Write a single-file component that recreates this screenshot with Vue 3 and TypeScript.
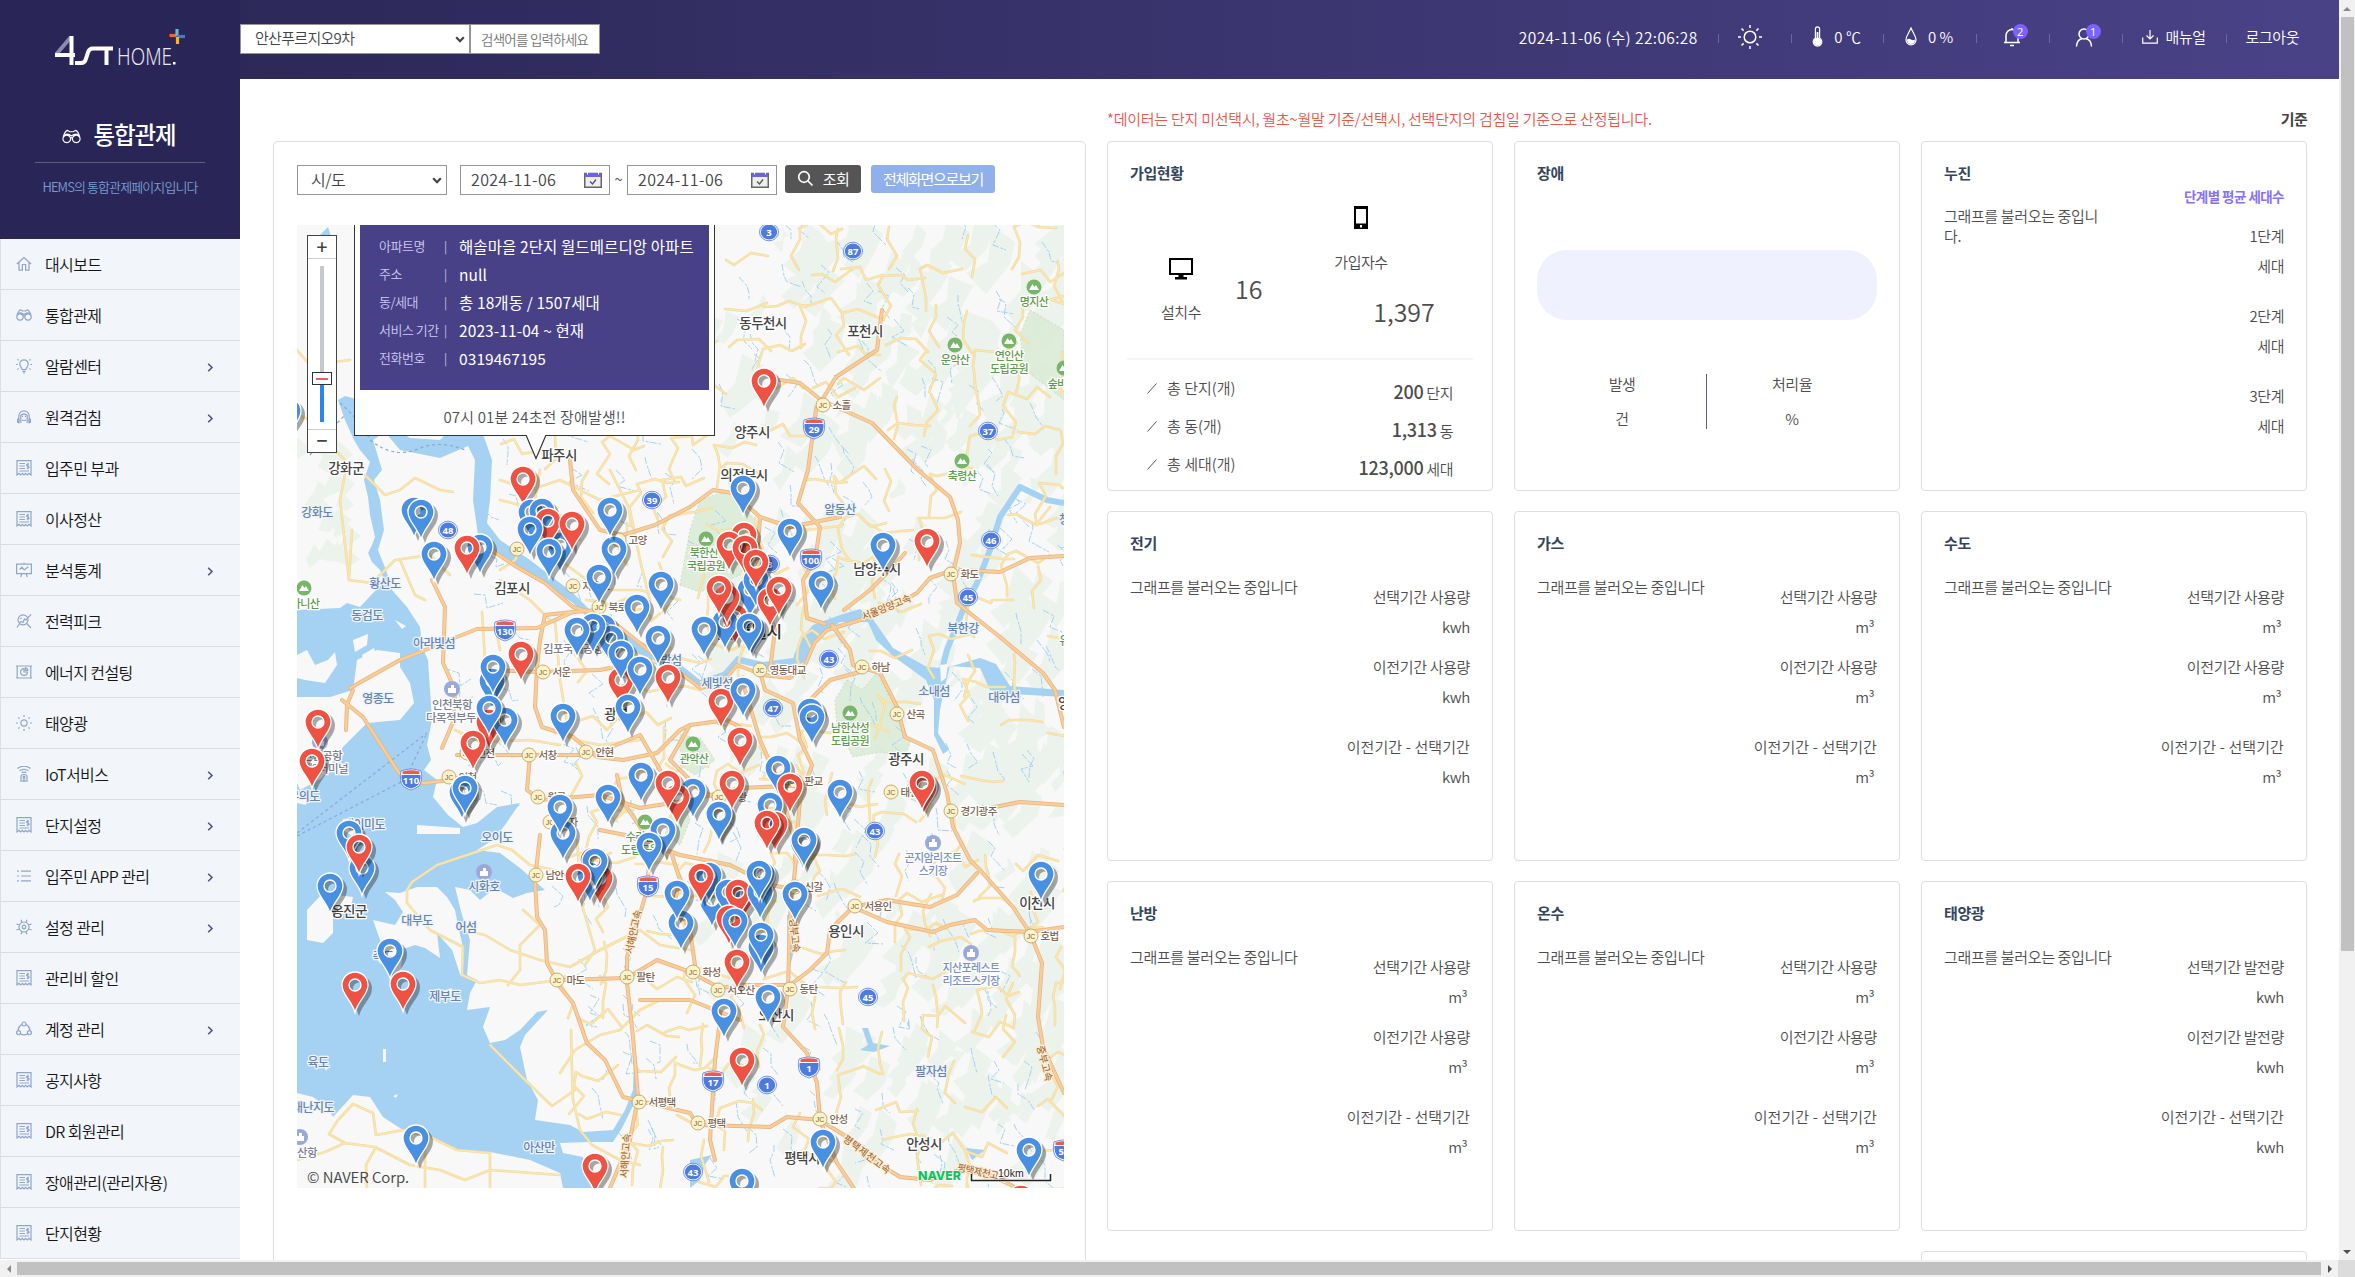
<script setup lang="ts">
interface MenuItem { label: string; icon: string; sub?: boolean }
const menu: MenuItem[] = [
  { label: '대시보드', icon: 'home' },
  { label: '통합관제', icon: 'bino' },
  { label: '알람센터', icon: 'bulb', sub: true },
  { label: '원격검침', icon: 'head', sub: true },
  { label: '입주민 부과', icon: 'bill' },
  { label: '이사정산', icon: 'bill' },
  { label: '분석통계', icon: 'board', sub: true },
  { label: '전력피크', icon: 'peak' },
  { label: '에너지 컨설팅', icon: 'consult' },
  { label: '태양광', icon: 'sun' },
  { label: 'IoT서비스', icon: 'iot', sub: true },
  { label: '단지설정', icon: 'bill', sub: true },
  { label: '입주민 APP 관리', icon: 'list', sub: true },
  { label: '설정 관리', icon: 'gear', sub: true },
  { label: '관리비 할인', icon: 'bill' },
  { label: '계정 관리', icon: 'share', sub: true },
  { label: '공지사항', icon: 'bill' },
  { label: 'DR 회원관리', icon: 'bill' },
  { label: '장애관리(관리자용)', icon: 'bill' },
  { label: '단지현황', icon: 'bill' },
]
const icons: Record<string, string> = {
  home: 'M.8 8 8 1.6 15.2 8M3 6.5V14.2H6.4V8.5H9.6V14.2H13V6.5',
  bino: 'M.8 9.5C1.600 6 3 3.200 4.600 2.800L6.500 4H9.500L11.400 2.800C13 3.200 14.400 6 15.200 9.500M4 6.800a3.200 3.200 0 1 0 .01 0M12 6.800a3.200 3.200 0 1 0 .01 0M7 9.600Q8 8.400 9 9.600M2.500 6.500Q5 5 8 7.500 11 5 13.500 6.500',
  bulb: 'M6 11.5C6 9.8 3.8 8.8 3.8 6a4.2 4.2 0 0 1 8.4 0C12.2 8.8 10 9.8 10 11.5ZM6.3 13.3H9.7M7 15H9M0 6.5H1.6M14.4 6.5H16M1.4 1.3 2.6 2.4M14.6 1.3 13.4 2.4M1.4 11.4 2.6 10.6M14.6 11.4 13.4 10.6',
  head: 'M2.8 10V7a5.2 5.2 0 0 1 10.4 0V10M4.8 14V6.5Q8 3.5 11.2 6.5V14M2 9.5V14M1.6 10V13.5M3 9.500V14.500M13 9.500V14.500M14 9.5V14M14.4 10V13.5M6.5 6.8V8.2M9.5 6.8V8.2M6.2 11Q8 12 9.8 11',
  bill: 'M1 .6H15V15L13 13.4 11.3 15 9.6 13.4 8 15 6.4 13.4 4.7 15 3 13.4 1 15ZM3.4 3.5H9M3.4 6H9M3.4 8.5H9M3.4 11H13M13 4H11.5Q10.5 4.2 10.6 5.2 11 6 12 6 13.2 6.5 13 7.5 12.6 8.4 10.7 8.2M11.9 2.8V9.2',
  board: 'M.6 2.2H15.4V11.6H.6ZM8 .8V2.2M5.8 11.6 4.8 15M10.2 11.6 11.2 15M3.6 7.5 6 5.2 8.2 8 12.4 4.8',
  peak: 'M7 1.8a5 5 0 1 0 .01 0M10.6 10.5 15 15M1 14.5 5 8.5 7 9.5 8.5 6 10 7 15 1.4M4 5.5 6 5',
  consult: 'M0 2H16M0 14H16M1.2 2V14M14.8 2V14M8 4.6a3.4 3.4 0 1 0 3.4 3.4H8ZM9.5 3.8A3 3 0 0 1 12 6.5H9.5Z',
  sun: 'M8 4.8a3.2 3.2 0 1 0 .01 0M8 0V2M8 14V16M0 8H2M14 8H16M2.3 2.3 3.6 3.6M12.4 12.4 13.7 13.7M2.3 13.7 3.6 12.4M12.4 3.6 13.7 2.3',
  iot: 'M1.5 2.4Q8-2 14.5 2.4M3.6 4.8Q8 1.8 12.4 4.8M5.6 6.8Q8 5.4 10.4 6.8M5 16V10.5Q5 8.5 8 8.5T11 10.5V16ZM6.5 13H9.5M6.5 14.6H9.5M8 10.2a.8.8 0 1 0 .01 0',
  list: 'M1 3.2H3M5 3.2H15M1 8H3M5 8H15M1 12.8H3M5 12.8H15',
  gear: 'M8 3a5 5 0 1 0 .01 0M8 6.2a1.8 1.8 0 1 0 .01 0M5 .8 6 3.400M11 .8 10 3.400M5 15.200 6 12.600M11 15.200 10 12.600M.4 5 3.600 6M.4 11 3.600 10M12.400 6 15.600 5M12.400 10 15.600 11',
  share: 'M8 1a2 2 0 1 0 .01 0M2.6 9.6a2 2 0 1 0 .01 0M13.4 9.6a2 2 0 1 0 .01 0M5.8 3.6Q2.4 5.5 2 9.4M10.2 3.6Q13.6 5.5 14 9.4M4.6 13Q8 14.8 11.4 13',
}

interface Usage { title: string; unit: string; kind: string }
const usage: Usage[] = [
  { title: '전기', unit: 'kwh', kind: '사용량' },
  { title: '가스', unit: 'm³', kind: '사용량' },
  { title: '수도', unit: 'm³', kind: '사용량' },
  { title: '난방', unit: 'm³', kind: '사용량' },
  { title: '온수', unit: 'm³', kind: '사용량' },
  { title: '태양광', unit: 'kwh', kind: '발전량' },
]
const totals = [
  { label: '총 단지(개)', value: '200', unit: '단지' },
  { label: '총 동(개)', value: '1,313', unit: '동' },
  { label: '총 세대(개)', value: '123,000', unit: '세대' },
]
const info = [
  ['아파트명', '해솔마을 2단지 월드메르디앙 아파트'],
  ['주소', 'null'],
  ['동/세대', '총 18개동 / 1507세대'],
  ['서비스 기간', '2023-11-04 ~ 현재'],
  ['전화번호', '0319467195'],
]

/* ---------- map data ---------- */
const sea = '297,610 340,608 347,603 360,607 373,593 385,582 380,570 372,562 368,553 372,545 375,537 370,515 368,497 364,480 370,462 360,450 354,440 345,420 338,400 345,396 360,400 380,420 410,438 440,440 465,415 484,437 492,460 490,500 487,523 500,540 530,560 573,593 600,620 657,650 680,664 700,680 723,672 737,656 763,662 793,658 800,640 813,625 840,615 860,609 872,618 893,648 927,667 945,668 980,658 996,664 1010,686 1064,690 1064,697 1010,694 990,690 980,668 950,666 944,690 940,710 938,733 949,750 943,754 934,735 934,700 926,680 893,656 876,640 868,622 840,622 815,640 805,662 790,668 763,669 738,663 725,681 700,690 680,675 655,664 610,640 573,603 540,580 500,555 478,535 473,500 475,460 468,446 440,458 400,450 385,432 373,440 382,470 374,480 380,500 384,530 378,550 386,570 392,590 407,607 420,627 422,647 428,660 430,690 432,720 427,745 431,760 424,770 437,780 433,797 448,815 463,827 477,823 497,807 520,803 505,825 493,840 477,850 500,853 520,868 545,890 527,893 513,898 495,888 480,900 470,890 455,887 462,915 470,940 467,975 477,980 470,993 467,1010 490,1007 483,1027 490,1043 505,1040 520,1030 537,1012 548,1010 525,1035 520,1047 527,1080 538,1100 535,1120 570,1125 583,1132 613,1130 625,1110 633,1090 634,1060 637,1060 636,1100 622,1128 613,1142 587,1142 560,1143 563,1153 583,1157 592,1188 563,1188 560,1173 530,1160 490,1152 457,1150 430,1137 403,1130 383,1117 370,1097 353,1095 333,1117 327,1107 313,1097 297,1093'
const northHan = '940,677 947,650 963,610 977,583 990,550 1000,517 1020,487 1047,500 1064,503'
const islands = [
  '297,697 330,697 353,690 357,660 377,650 400,653 400,667 410,683 414,703 400,720 367,723 343,747 322,778 300,790 297,783',
  '297,655 307,650 315,665 328,660 335,652 337,665 325,683 305,680 297,678',
  '353,640 368,634 367,645 355,652', '362,655 374,648 376,656 364,665',
  '307,910 323,893 353,897 350,910 333,917 333,933 323,943 307,940',
  '385,892 400,893 417,887 437,887 447,897 455,910 459,930 463,947 461,977 452,950 437,933 440,958 425,948 415,945 400,950 395,965 385,955 380,940 373,920 395,925 403,912 395,900',
  '372,955 388,948 402,958 400,975 388,970', '440,992 452,988 450,998 442,1000', '345,820 358,826 352,836 343,830',
  '417,825 460,828 460,834 417,834', '383,1049 386,1049 386,1062 383,1062', '393,1096 398,1094 396,1098', '324,1066 328,1068 326,1071', '297,795 308,793 306,805 297,803',
  '315,1112 320,1115 316,1120', '395,620 406,626 402,629', '940,665 948,664 946,678 941,682',
]
const parks = [
  '680,585 690,530 700,500 730,490 755,520 757,540 740,575 700,592',
  '847,680 862,690 877,673 897,713 910,743 905,756 880,752 853,757 837,727 835,700',
  '1030,310 1064,330 1064,400 1045,385 1025,370 1020,335', '673,807 683,800 690,820 680,845 665,835', '680,735 700,738 715,760 695,775 680,765',
]
const highways = [
  '432,580 445,607 443,663 455,690 453,722 442,748', '350,688 400,660 430,648 457,637 477,629 537,628 573,612 600,610',
  '342,700 363,717 397,770 405,780 425,783 450,780 470,775', '353,690 347,705 346,730',
  '570,460 573,490 600,530 623,535 655,525 690,507 713,490 733,493 760,517 790,527 815,522 840,517',
  '487,547 517,567 545,583 573,607 607,617 657,657 690,680 700,688 723,682 737,665 763,675 790,678 805,665 815,642 827,630 860,620 887,610 917,593 930,578 953,570',
  '573,612 545,615 540,640 537,667 535,707 542,727 573,737 597,757 623,760 657,753 680,730 690,725 727,720 745,730',
  '457,755 497,755 530,755 587,755 600,752 640,735 660,770', '530,755 527,790 540,800 600,795 640,808 690,800 740,788 790,786',
  '490,670 540,672 600,670 650,660', '617,775 622,800 642,830 650,860 645,897 627,957 627,983 633,1037 638,1097 630,1140 610,1188',
  '540,835 535,880 537,917 545,930 547,963 560,987 573,1003 587,1043 605,1060 623,1097 690,1113 698,1125 770,1127 787,1117 820,1120 847,1137 865,1155 900,1177 930,1180 960,1170 990,1175 1013,1186',
  '560,980 627,978 657,960 690,972 720,988 745,985 790,985 810,970 827,953 830,930 853,907 887,900 930,907 957,895 977,873',
  '853,907 887,922 933,932 950,925 975,920 987,930 1030,932 1064,927',
  '745,690 760,740 778,780 797,850 790,917 788,990 783,1027 807,1053 817,1083 820,1120 837,1163 855,1190',
  '760,672 765,690 793,703 800,740 812,765 800,800 795,860', '832,625 850,650 853,665 880,673 897,707 905,737 933,750 947,793 953,827 970,860 980,870 1013,907 1030,933 1042,963 1038,1017 1043,1047 1064,1093',
  '882,310 877,350 836,377 816,410 808,470 798,503 820,527 815,560 803,580 807,618 825,624', '780,380 800,383 821,400 872,423 918,470 950,497 958,520 960,543 953,573 957,603 1000,637 1043,673 1055,690 1064,727',
  '960,570 1000,572 1030,558 1064,556', '760,517 757,560 765,600 775,630 770,670', '844,610 870,590 885,575 905,553',
  '600,830 625,835 680,855 730,865 770,885 800,890', '690,725 670,760 700,790 720,800', '990,808 1020,802 1064,805', '720,1020 715,1060 710,1140 715,1160', '640,1000 690,1000 740,1020',
  '672,855 680,880 675,900 690,930 695,965', '810,700 830,680 860,672',
]
const roads = [
  '345,474 340,500 349,580 372,583 395,560 430,555 450,575', '365,475 385,495 400,490 415,478 440,490 453,492', '349,580 352,530', '297,350 310,365 350,360',
  '400,560 415,595 425,600', '297,415 310,420 330,445 345,460', '482,612 485,660 487,690', '497,635 500,650', '540,470 530,530 515,560 500,570',
  '407,890 412,882 437,865 497,845 512,850 530,865 555,870', '407,890 407,903 430,930 463,947 462,975 480,983 500,980 520,985 560,980', '463,930 485,935 510,950 540,960 570,967 600,950 640,930',
  '490,1045 520,1075 552,1106 575,1090', '523,910 540,925 520,945 520,970 508,985', '329,1134 338,1120 353,1104 373,1113 376,1135 403,1130 430,1137 457,1150 490,1153',
  '329,1134 345,1143 375,1147 410,1165 440,1170 465,1180 490,1170 560,1175', '297,1160 325,1152 345,1143', '376,1147 366,1165 367,1188', '425,1150 425,1188', '490,1153 490,1188',
  '571,1030 572,1070 573,1100 580,1130 592,1145 620,1160 640,1165', '560,1073 575,1050 600,1035 620,1030 640,1010 660,1000',
  '575,740 600,745 640,740', '455,730 480,742 530,740 560,745', '500,580 530,600 550,620', '577,840 582,905 595,950 585,965', '600,950 640,930 660,945 690,950',
  '500,480 530,490 560,480 600,500 640,490', '500,500 540,510 580,540', '610,470 630,510 640,560 650,600', '560,560 600,590 640,590 680,600', '555,620 560,680 570,740',
]

let seed = 20241
const rnd = (): number => {
  seed = (seed * 1103515245 + 12345) % 2147483648
  return seed / 2147483648
}
/* western limit of solid ground at a given height */
const coast = (y: number): number => (y < 470 ? 510 : y < 830 ? 585 : y < 1010 ? 560 : y < 1120 ? 585 : 625)
const j = (v: number, a: number): number => Math.round(v + (rnd() - 0.5) * a)

const minor: string[] = []
const streams: string[] = []
const hills: string[] = []
const step = 42
for (let y = 225; y < 1230; y += step) {
  for (let x = coast(y); x < 1090; x += step) {
    const px = j(x, 20), py = j(y, 20)
    if (rnd() < 0.5) minor.push(`${px},${py} ${j(px + 13, 16)},${j(py, 16)} ${j(px + 27, 12)},${j(py, 22)} ${px + step},${j(py, 16)}`)
    if (rnd() < 0.5) minor.push(`${px},${py} ${j(px, 16)},${j(py + 13, 10)} ${j(px, 20)},${j(py + 27, 10)} ${j(px, 14)},${py + step}`)
    const sx = j(px, 60), sy = j(py, 60)
    streams.push(`${sx},${sy} ${j(sx + 6, 12)},${j(sy + 8, 8)} ${j(sx + 4, 16)},${j(sy + 18, 8)} ${j(sx + 10, 20)},${j(sy + 26, 14)}`)
  }
}
for (let i = 0; i < 330; i++) {
  const x = 700 + Math.pow(rnd(), 0.7) * 365, y = 225 + rnd() * 960
  const s = 10 + rnd() * 24
  hills.push(`${j(x, 6)},${j(y - s, 6)} ${j(x + s * 0.7, 8)},${j(y - s * 0.5, 8)} ${j(x + s * 0.4, 8)},${j(y + s * 0.2, 8)} ${j(x - s * 0.3, 8)},${j(y + s, 8)} ${j(x - s * 0.8, 8)},${j(y + s * 0.5, 8)} ${j(x - s * 0.2, 6)},${j(y, 6)}`)
}
for (let i = 0; i < 30; i++) {
  const x = 297 + rnd() * 90, y = 440 + rnd() * 120
  if (x < 350) hills.push(`${j(x, 6)},${j(y - 12, 6)} ${j(x + 12, 8)},${j(y, 8)} ${j(x, 8)},${j(y + 10, 8)} ${j(x - 10, 8)},${j(y + 5, 8)}`)
}
for (let i = 0; i < 26; i++) {
  const x = 420 + rnd() * 90, y = 480 + rnd() * 330
  if (x > 445) streams.push(`${j(x, 6)},${j(y, 6)} ${j(x + 10, 8)},${j(y + 3, 8)} ${j(x + 14, 8)},${j(y + 14, 8)} ${j(x + 24, 8)},${j(y + 12, 8)}`)
}

type Pt = [number, number, string]
const big: Pt[] = [
  [346, 468, '강화군'], [512, 588, '김포시'], [763, 323, '동두천시'], [865, 331, '포천시'], [752, 432, '양주시'], [744, 475, '의정부시'], [877, 569, '남양주시'],
  [906, 759, '광주시'], [846, 931, '용인시'], [1037, 903, '이천시'], [776, 1015, '오산시'], [924, 1144, '안성시'], [802, 1158, '평택시'], [349, 911, '옹진군'], [559, 455, '파주시'], [616, 714, '광명'],
]
const water: Pt[] = [
  [317, 512, '강화도'], [385, 583, '황산도'], [367, 615, '동검도'], [434, 643, '아라빛섬'], [378, 698, '영종도'], [497, 837, '오이도'], [417, 920, '대부도'],
  [466, 927, '어섬'], [445, 996, '제부도'], [318, 1062, '육도'], [539, 1147, '아산만'], [840, 509, '알동산'], [963, 628, '북한강'],
  [934, 691, '소내섬'], [1004, 697, '대하섬'], [717, 683, '세빛섬'], [671, 660, '밤섬'], [931, 1071, '팔자섬'], [484, 886, '시화호'], [364, 824, '대이미도'], [383, 956, '측도'],
]
const green: Pt[] = [
  [1034, 302, '명지산'], [955, 360, '운악산'], [1009, 356, '연인산'], [1009, 369, '도립공원'], [962, 476, '축령산'], [704, 553, '북한산'], [706, 566, '국립공원'],
  [850, 728, '남한산성'], [850, 741, '도립공원'], [694, 759, '관악산'], [640, 837, '수리산'], [640, 850, '도립공원'],
]
/* names that run past the left or right border of the map window */
const edge: [number, number, string, string][] = [
  [1064, 703, '양', 'big'], [305, 603, '마니산', 'green'], [1062, 383, '숲바다', 'green'], [1064, 640, '유', 'green'],
  [313, 1107, '대난지도', 'wat'], [304, 796, '무의도', 'wat'], [1064, 519, '청', 'wat'], [302, 1152, '서산항', 'gray'],
  [322, 755, '인천공항', 'gray'], [325, 768, '제2터미널', 'gray'],
]
const greenDots = [[1034, 287], [955, 345], [1009, 341], [1064, 368], [962, 461], [706, 539], [304, 588], [850, 713], [693, 744], [645, 822]]
const gray: Pt[] = [[452, 704, '인천북항'], [451, 717, '다목적부두'], [573, 648, '김포국제공항']]
const resort: Pt[] = [[933, 858, '곤지암리조트'], [933, 871, '스키장'], [971, 968, '지산포레스트'], [971, 981, '리조트스키장']]
const dots = [[452, 689], [484, 872], [933, 843], [971, 953], [300, 1137], [320, 742]]
const jc: Pt[] = [
  [823, 405, '소흘'], [517, 549, ''], [573, 586, '자유로'], [599, 607, '북로'], [543, 672, '서운'], [529, 755, '서창'], [586, 752, '안현'], [449, 777, '인천'], [538, 797, '월곶'], [467, 753, '인천'],
  [550, 822, '군자'], [536, 875, '남안산'], [557, 980, '마도'], [627, 977, '팔탄'], [639, 1102, '서평택'], [760, 670, '영동대교'], [862, 667, '하남'], [897, 714, '산곡'], [951, 574, '화도'],
  [891, 792, '태전'], [951, 811, '경기광주'], [719, 797, '의왕'], [795, 781, '판교'], [855, 906, '서용인'], [1031, 936, '호법'], [693, 972, '화성'], [718, 990, '서오산'], [790, 989, '동탄'],
  [795, 887, '신갈'], [698, 1123, '평택'], [820, 1119, '안성'], [619, 540, '고양'],
]
const routes: Pt[] = [[769, 232, '3'], [853, 251, '87'], [988, 431, '37'], [652, 500, '39'], [448, 530, '48'], [991, 540, '46'], [968, 597, '45'], [829, 659, '43'], [773, 708, '47'], [875, 831, '43'], [868, 997, '45'], [767, 1085, '1'], [693, 1172, '43'], [770, 564, '3']]
const shields: Pt[] = [[814, 428, '29'], [811, 559, '100'], [505, 630, '130'], [411, 779, '110'], [648, 886, '15'], [713, 1081, '17'], [809, 1067, '1'], [1064, 1150, '50']]
const brown: [number, number, number, string, number][] = [
  [886, 607, -22, '서울양양고속', 52], [633, 932, -78, '서해안고속', 44], [625, 1156, -86, '서해안고속', 44], [795, 935, 84, '경부고속', 34],
  [1045, 1063, 76, '중부고속', 36], [867, 1154, 37, '평택제천고속', 56], [982, 1172, 12, '평택제천고속', 50],
]

type Pin = [number, number, 0 | 1]
const pins: Pin[] = [
  [288, 411, 0], [764, 381, 1], [414, 510, 0], [421, 512, 0], [523, 479, 1], [531, 512, 0], [542, 511, 0], [560, 545, 0], [548, 521, 1], [530, 529, 0], [572, 524, 1], [549, 551, 0],
  [614, 549, 0], [610, 510, 0], [599, 577, 0], [661, 584, 0], [637, 607, 0], [434, 554, 0], [480, 547, 0], [467, 548, 1], [603, 627, 0], [611, 638, 0], [593, 626, 0], [577, 630, 0],
  [621, 680, 1], [621, 653, 0], [658, 638, 0], [640, 669, 0], [668, 677, 1], [628, 707, 0], [521, 654, 1], [492, 681, 0], [493, 667, 0], [489, 722, 1], [505, 720, 0], [489, 708, 0], [473, 743, 1],
  [563, 716, 0], [318, 722, 1], [312, 761, 1], [462, 792, 0], [465, 788, 0], [563, 833, 0], [560, 807, 0], [608, 797, 0], [641, 775, 0], [693, 791, 0], [677, 797, 1], [668, 783, 1], [663, 830, 0], [649, 845, 0],
  [743, 488, 0], [790, 531, 0], [744, 535, 1], [729, 544, 1], [750, 590, 0], [745, 548, 1], [756, 580, 0], [756, 562, 1], [821, 583, 0], [735, 617, 1], [725, 622, 0], [727, 597, 1], [719, 588, 1],
  [770, 600, 1], [779, 589, 1], [704, 629, 0], [752, 628, 0], [749, 626, 0], [883, 545, 0], [927, 541, 1], [721, 701, 1], [743, 690, 0], [810, 711, 0], [812, 717, 0], [740, 740, 1],
  [778, 768, 0], [732, 783, 1], [790, 786, 1], [840, 792, 0], [924, 787, 1], [922, 783, 1], [718, 814, 0], [719, 814, 0], [770, 805, 0], [775, 824, 1], [767, 823, 1], [803, 842, 0], [804, 840, 0],
  [349, 833, 0], [362, 868, 0], [359, 847, 1], [330, 886, 0], [390, 951, 0], [403, 984, 1], [355, 985, 1], [600, 878, 1], [590, 875, 0], [593, 860, 1], [595, 861, 0], [578, 876, 1],
  [681, 923, 0], [677, 893, 0], [712, 900, 0], [709, 875, 0], [701, 876, 1], [728, 892, 0], [741, 896, 1], [738, 892, 1], [760, 892, 0], [762, 874, 0], [759, 873, 0], [795, 894, 0], [729, 918, 1], [735, 921, 0],
  [761, 947, 0], [761, 935, 0], [737, 962, 1], [768, 997, 0], [724, 1011, 0], [742, 1060, 1], [1041, 874, 0], [823, 1142, 0], [1029, 1150, 0], [742, 1181, 0], [1021, 1198, 1], [416, 1138, 0], [595, 1166, 1],
]
const pinPath = 'M0 27.5C-3.5 15-13 10-13 0A13 13 0 0 1 13 0C13 10 3.5 15 0 27.5ZM0-6A6 6 0 1 0 0 6 6 6 0 1 0 0-6Z'
</script>

<template>
  <div class="page">
    <div class="view">
      <aside class="side">
        <div class="brand">
          <svg class="logo" width="132" height="40" viewBox="0 0 132 40">
            <path d="M1.500 26 16 9" stroke="#8d8ab0" stroke-width="4" />
            <path d="M0 27H20M16.500 8V37" stroke="#fff" stroke-width="4" />
            <path d="M20 35H26Q30 35 31 30.500L33 24.500Q34 20.500 38 20.500H58M51.500 20.500V37" fill="none" stroke="#fff" stroke-width="4" />
            <text x="62" y="36.500" textLength="55" lengthAdjust="spacingAndGlyphs" class="logo-text">HOME</text>
            <rect x="118" y="34" width="2.500" height="2.500" fill="#fff" />
            <path d="M114.500 7.500H121.500" stroke="#e8663d" stroke-width="3.200" /><path d="M122 1V8" stroke="#5bc0d0" stroke-width="3.200" />
            <path d="M122 8.500H130" stroke="#4a78c8" stroke-width="3.200" /><path d="M122.500 9V16" stroke="#f3b61f" stroke-width="3.200" />
          </svg>
          <div class="brand-title">
            <svg width="19" height="19" viewBox="0 0 16 16" class="ico white"><path :d="icons.bino" /></svg>
            <span>통합관제</span>
          </div>
          <p class="brand-desc">HEMS의 통합관제페이지입니다</p>
        </div>
        <nav class="menu">
          <div v-for="m in menu" :key="m.label" class="item">
            <svg width="16" height="16" viewBox="0 0 16 16" class="ico"><path :d="icons[m.icon]" /></svg>
            <span class="item-label">{{ m.label }}</span>
            <svg v-if="m.sub" width="7" height="9" viewBox="0 0 7 9" class="chev"><path d="M1.200.8 5 4.500 1.200 8.200" /></svg>
          </div>
        </nav>
      </aside>

      <div class="right">
        <header class="top">
          <div class="box complex"><span>안산푸르지오9차</span><svg width="10" height="7" viewBox="0 0 10 7"><path d="M1.200 1.200 5 5.200 8.800 1.200" /></svg></div>
          <input class="search" placeholder="검색어를 입력하세요" />
          <div class="status">
            <span class="clock">2024-11-06 (수) 22:06:28</span>
            <span class="cell w73"><svg width="26" height="26" viewBox="0 0 26 26" class="wi sunny"><circle cx="13" cy="13" r="5.800" /><path d="M13 1V4M13 22V25M1 13H4M22 13H25M4.500 4.500 6.600 6.600M19.400 19.400 21.500 21.500M4.500 21.500 6.600 19.400M19.400 6.600 21.500 4.500" /></svg></span>
            <span class="cell w92"><svg width="11" height="21" viewBox="0 0 11 21" class="wi thin"><path d="M3.400 12V3a2.100 2.100 0 0 1 4.200 0V12a4.300 4.300 0 1 1-4.200 0Z" /><circle cx="5.500" cy="15.600" r="3.200" fill="#fff" /><path d="M5.500 6V14" stroke-width="1.800" /></svg><b class="val">0 ℃</b></span>
            <span class="cell w93"><svg width="12" height="19" viewBox="0 0 12 19" class="wi thin"><path d="M6 1C8 6 11 9 11 12.800a5 5 0 0 1-10 0C1 9 4 6 6 1Z" /><path d="M2 12.500Q4 11 6 12.500T10 12.500Q10 17 6 17T2 12.500Z" fill="#fff" stroke="none" /></svg><b class="val">0 %</b></span>
            <span class="cell w73"><svg width="18" height="20" viewBox="0 0 18 20" class="wi"><path d="M1 15.500H17M3 15.500V8.500a6 6 0 0 1 12 0V15.500M9 1V2.500M7 18.500H11" /></svg><i class="badge">2</i></span>
            <span class="cell w73"><svg width="18" height="20" viewBox="0 0 18 20" class="wi person"><circle cx="9" cy="7" r="5" /><path d="M1.500 19.500Q2 12.500 7 11.800M16.500 19.500Q16 12.500 11 11.800" /></svg><i class="badge">1</i></span>
            <span class="cell w104"><svg width="16" height="14" viewBox="0 0 16 14" class="wi thin"><path d="M8 0V8.500M4.500 5.500 8 9 11.500 5.500M.7 7.500V13.200H15.300V7.500" /></svg><span class="man">매뉴얼</span></span>
            <span class="cell logout">로그아웃</span>
          </div>
        </header>

        <main class="main">
          <section class="map-card">
            <div class="filters">
              <div class="box city"><span>시/도</span><svg width="10" height="7" viewBox="0 0 10 7"><path d="M1.200 1.200 5 5.200 8.800 1.200" /></svg></div>
              <template v-for="n in 2" :key="n">
                <div class="box date"><span>2024-11-06</span>
                  <svg class="cal" width="18" height="16" viewBox="0 0 18 16"><rect x=".75" y="1.500" width="16.500" height="13.750" fill="#eee" stroke="#666" stroke-width="1.500" /><rect x="1" y="1" width="16" height="4" fill="#6c63e0" /><path d="M3.500 0V2.500M14.500 0V2.500" stroke="#fff" /><path d="M6 9.500 8.500 12 12 7.500" fill="none" stroke="#555" stroke-width="1.300" /></svg>
                </div>
                <span v-if="n === 1" class="tilde">~</span>
              </template>
              <button class="btn find"><svg width="17" height="17" viewBox="0 0 17 17"><circle cx="7" cy="7" r="5.300" /><path d="M11 11 15.500 15.500" /></svg>조회</button>
              <button class="btn full">전체화면으로보기</button>
            </div>
            <div class="map">
              <svg class="canvas" width="767" height="963" viewBox="297 225 767 963">
                <rect x="297" y="225" width="767" height="963" fill="#f7f8f7" />
                <g fill="#deebdc" opacity=".4"><polygon v-for="(h, i) in hills" :key="i" :points="h" /></g>
                <g fill="#d9ebd4" stroke="#c2d8bb" stroke-dasharray="2 2" opacity=".8"><polygon v-for="p in parks" :key="p" :points="p" /></g>
                <g class="stream"><polyline v-for="(s, i) in streams" :key="i" :points="s" /></g>
                <polygon :points="sea" fill="#a5d2f3" />
                <polyline :points="northHan" fill="none" stroke="#a5d2f3" stroke-width="6" stroke-linejoin="round" />
                <path d="M860 1050 868 1045 862 1028H868L873 1043 890 1046 874 1052ZM690 1160 712 1155 706 1163 700 1180 690 1188ZM787 915H794V950L788 975ZM910 1030 907 1024 909 1018ZM966 1148 985 1150 972 1160ZM320 235 328 227 331 236Z" fill="#a5d2f3" />
                <g fill="#f7f8f7"><polygon v-for="p in islands" :key="p" :points="p" /></g>
                <g fill="none" stroke="#8ea6cf" stroke-width="1.200" stroke-dasharray="3 3"><path d="M297 833 427 733M297 836 405 780 427 733M310 455Q330 430 345 415M340 403Q360 420 370 440 395 460 420 448 440 440 465 450" /></g>
                <g class="yc"><polyline v-for="(r, i) in minor" :key="i" :points="r" /><polyline v-for="r in roads" :key="r" :points="r" /></g>
                <g class="y"><polyline v-for="(r, i) in minor" :key="i" :points="r" /><polyline v-for="r in roads" :key="r" :points="r" /></g>
                <g class="oc"><polyline v-for="r in highways" :key="r" :points="r" /></g>
                <g class="o"><polyline v-for="r in highways" :key="r" :points="r" /></g>
                <g class="lb brown"><text v-for="(b, i) in brown" :key="i" :transform="`translate(${b[0]} ${b[1]}) rotate(${b[2]})`" :textLength="b[4]" y="4">{{ b[3] }}</text></g>
                <g v-for="d in greenDots" :key="d[0] + '-' + d[1]" :transform="`translate(${d[0]} ${d[1]})`"><circle r="7.500" fill="#77b56a" /><path d="M-5 3-1.500-3 .5 0 2-2 5 3Z" fill="#fff" /></g>
                <g v-for="d in dots" :key="d[0] + '-' + d[1]" :transform="`translate(${d[0]} ${d[1]})`"><circle r="8" fill="#9aa9dc" /><path d="M-4 4V-1H-1V-4H2V-1H4V4Z" fill="#fff" /></g>
                <g class="lb green"><text v-for="t in green" :key="t[0] + '-' + t[1]" :x="t[0]" :y="t[1] + 4">{{ t[2] }}</text></g>
                <g class="lb gray"><text v-for="t in gray" :key="t[0] + '-' + t[1]" :x="t[0]" :y="t[1] + 4.500">{{ t[2] }}</text></g>
                <g class="lb resort"><text v-for="t in resort" :key="t[0] + '-' + t[1]" :x="t[0]" :y="t[1] + 4">{{ t[2] }}</text></g>
                <g class="lb wat"><text v-for="t in water" :key="t[0] + '-' + t[1]" :x="t[0]" :y="t[1] + 4.500">{{ t[2] }}</text></g>
                <g v-for="t in edge" :key="t[2]" class="lb" :class="t[3]"><text :x="t[0]" :y="t[1] + 4.500">{{ t[2] }}</text></g>
                <g v-for="t in jc" :key="t[0] + '-' + t[1]" :transform="`translate(${t[0]} ${t[1]})`" class="jc"><circle r="7" /><text y="2.600" class="jct">JC</text><text x="9.500" y="4" class="jcn">{{ t[2] }}</text></g>
                <g v-for="t in routes" :key="t[0] + '-' + t[1]" :transform="`translate(${t[0]} ${t[1]})`" class="rt"><ellipse rx="9.500" ry="8.800" fill="#fff" stroke="#4f7be0" stroke-width=".8" /><ellipse rx="8.200" ry="7.500" fill="#4f7be0" /><text y="3.500">{{ t[2] }}</text></g>
                <g v-for="t in shields" :key="t[0] + '-' + t[1]" :transform="`translate(${t[0]} ${t[1]})`" class="rt"><path d="M-10-8Q0-12 10-8 12 2 8 7 4 10 0 11-4 10-8 7-12 2-10-8Z" fill="#fff" stroke="#4f7be0" stroke-width=".8" /><path d="M-9.500-4H9.500Q10 2 7 6 4 9 0 9.500-4 9-7 6-10 2-9.500-4Z" fill="#4f7be0" /><path d="M-8.500-7.500Q0-10 8.500-7.500V-5H-8.500Z" fill="#ee5a4c" /><text y="5">{{ t[2] }}</text></g>
                <g class="lb big"><text v-for="t in big" :key="t[0] + '-' + t[1]" :x="t[0]" :y="t[1] + 5">{{ t[2] }}</text></g>
                <text x="744" y="638" class="lb seoul">서울특별시</text>
                <g v-for="(p, i) in pins" :key="i" :transform="`translate(${p[0]} ${p[1]})`">
                  <path :d="pinPath" fill-rule="evenodd" transform="translate(4 3.500)" fill="#000" fill-opacity=".33" />
                  <path :d="pinPath" fill-rule="evenodd" :fill="p[2] ? '#ef5142' : '#4a90e2'" stroke="#fff" stroke-width="1.300" />
                </g>
                <text x="307" y="1182.500" class="copy" textLength="102">© NAVER Corp.</text>
                <text x="918" y="1180" class="naver" textLength="43" lengthAdjust="spacingAndGlyphs">NAVER</text>
                <path d="M971.500 1174V1180.500H1050.500V1174" fill="none" stroke="#fff" stroke-width="3" opacity=".7" /><path d="M971.500 1174V1180.500H1050.500V1174" fill="none" stroke="#222" stroke-width="1.500" />
                <text x="998" y="1177" class="km">10km</text>
              </svg>
              <div class="zoomer">
                <span class="zb">+</span>
                <div class="track"><i class="blue"></i><i class="knob"></i></div>
                <span class="zb last">−</span>
              </div>
              <div class="popup">
                <div class="info">
                  <div v-for="r in info" :key="r[0]" class="irow"><span class="ik">{{ r[0] }}</span><span class="ib">|</span><span class="iv">{{ r[1] }}</span></div>
                </div>
                <p class="ago">07시 01분 24초전 장애발생!!</p>
                <svg class="tail" width="20" height="25" viewBox="0 0 20 25"><path d="M0 0 10 23.500 20 0" fill="#fff" stroke="#333" stroke-width="1.200" /></svg>
              </div>
            </div>
          </section>

          <section class="panels">
            <div class="note"><span>*데이터는 단지 미선택시, 월초~월말 기준/선택시, 선택단지의 검침일 기준으로 산정됩니다.</span><b>기준</b></div>
            <div class="grid">
              <article class="card">
                <h3>가입현황</h3>
                <div class="join">
                  <div class="jcell inst">
                    <div class="jic"><svg width="24" height="22" viewBox="0 0 24 22"><path d="M1 1H23V16H1Z" fill="none" stroke="#000" stroke-width="2" /><path d="M9.500 17H14.500V19H18V21.500H6V19H9.500Z" /></svg><span>설치수</span></div>
                    <strong class="n16">16</strong>
                  </div>
                  <div class="jcell subs"><svg width="14" height="23" viewBox="0 0 14 23"><path d="M0 0H14V23H0ZM2 3V17.500H12V3ZM6 19V21.500H8V19Z" fill-rule="evenodd" /></svg><span>가입자수</span><strong>1,397</strong></div>
                </div>
                <ul class="totals"><li v-for="t in totals" :key="t.label"><svg width="10" height="11" viewBox="0 0 10 11"><path d="M.5 10.500 9.500.5" stroke="#555" /></svg><span class="tl">{{ t.label }}</span><span class="tv"><b>{{ t.value }}</b> {{ t.unit }}</span></li></ul>
              </article>
              <article class="card">
                <h3>장애</h3>
                <div class="blob"></div>
                <div class="faults"><div><span>발생</span><span>건</span></div><div><span>처리율</span><span>%</span></div></div>
              </article>
              <article class="card">
                <h3>누진</h3>
                <div class="split">
                  <p class="load narrow">그래프를 불러오는 중입니다.</p>
                  <div class="steps"><b>단계별 평균 세대수</b><div v-for="n in 3" :key="n" class="grp"><span>{{ n }}단계</span><span>세대</span></div></div>
                </div>
              </article>
              <article v-for="u in usage" :key="u.title" class="card">
                <h3>{{ u.title }}</h3>
                <div class="split">
                  <p class="load">그래프를 불러오는 중입니다</p>
                  <div class="uses" :class="{ cubic: u.unit !== 'kwh' }">
                    <div class="grp"><span>선택기간 {{ u.kind }}</span><span class="u">{{ u.unit }}</span></div>
                    <div class="grp"><span>이전기간 {{ u.kind }}</span><span class="u">{{ u.unit }}</span></div>
                    <div class="grp"><span class="diff">이전기간 - 선택기간</span><span class="u">{{ u.unit }}</span></div>
                  </div>
                </div>
              </article>
              <article class="card last-card"></article>
            </div>
          </section>
        </main>
      </div>

      <div class="vbar"><i class="arr up"></i><i class="vthumb"></i><i class="arr down"></i></div>
    </div>
    <div class="hbar"><i class="arr left"></i><i class="hthumb"></i><i class="arr rightarr"></i><i class="corner"></i></div>
  </div>
</template>

<style>
html, body { margin: 0; overflow: hidden; }
</style>
<style scoped>
* { box-sizing: border-box; }
.page { width: 2355px; height: 1277px; overflow: hidden; background: #fff; font-family: "Noto Sans CJK KR", "Noto Sans", sans-serif; font-size: 15px; line-height: 20px; letter-spacing: -.45px; color: #4d4d4d; font-weight: 350; }
.view { display: flex; height: 1260px; overflow: hidden; background: linear-gradient(90deg, #292556 0, #2c2858 240px, #4a4287 100%) 0 0 / 2339px 79px no-repeat; }
.side { width: 241px; flex: none; }
.brand { height: 239px; width: 240px; background: #292556; display: flex; flex-direction: column; align-items: center; }
.logo { margin: 28px 0 0 2px; flex: none; width: 132px; overflow: visible; }
.logo-text { font: 300 23px "Noto Sans", sans-serif; fill: #e8e7f2; letter-spacing: 0; }
.brand-title { margin-top: 43px; height: 52px; width: 170px; border-bottom: 1px solid #605d80; display: flex; justify-content: center; color: #fff; font-size: 23.500px; line-height: 46px; font-weight: 500; letter-spacing: -1.100px; padding-right: 2px; }
.brand-title svg { margin: 16px 12px 0 0; }
.brand-desc { margin: 14px 0 0; font-size: 13px; color: #7b9bd3; letter-spacing: -.9px; }
.ico { fill: none; stroke: #8fa6c8; stroke-width: 1.200; flex: none; }
.ico.white { stroke: #fff; stroke-width: 1; }
.menu { background: #f2f5fa; border-left: 1px solid #dedfe2; border-right: 1px solid #dedfe2; }
.item { height: 51px; display: flex; align-items: center; border-bottom: 1px solid #dbdcdf; padding-left: 15px; padding-right: 26px; font-size: 16px; color: #151515; letter-spacing: -.6px; }
.item-label { margin: -1px 0 0 13px; flex: 1; }
.chev { fill: none; stroke: #4a4c8e; stroke-width: 1.500; margin-top: 3px; }
.right { width: 2099px; flex: none; margin-left: -1px; display: flex; flex-direction: column; }
.top { height: 79px; display: flex; flex: none; padding-top: 24px; align-items: flex-start; width: 2099px; }
.box { border: 1px solid #959595; background: #fff; height: 30px; display: flex; align-items: center; justify-content: space-between; color: #444; }
.box > svg { fill: none; stroke: #444; stroke-width: 2.200; }
.complex { width: 230px; padding: 0 4px 0 14px; letter-spacing: -.7px; }
.search { width: 130px; height: 30px; border: 1px solid #959595; padding: 0 0 0 10px; font: 350 13.500px "Noto Sans CJK KR", sans-serif; letter-spacing: -.75px; outline: none; }
.search::placeholder { color: #757575; }
.status { margin-left: auto; display: flex; align-items: center; height: 25px; color: #fff; padding-right: 40px; }
.clock { padding-right: 20px; font-size: 15.500px; letter-spacing: .4px; }
.cell { display: flex; align-items: center; justify-content: center; position: relative; height: 26px; }
.cell::before { content: ""; position: absolute; left: 0; top: 10px; width: 1px; height: 9px; background: #6d67a0; }
.w73 { width: 73px; } .w92 { width: 92px; } .w93 { width: 93px; } .w104 { width: 104px; }
.logout { padding-left: 20px; }
.wi { fill: none; stroke: #fff; stroke-width: 1.500; flex: none; }
.wi.thin { stroke-width: 1.200; }
.sunny { margin-right: 8px; }
.person { margin-right: 3px; }
.val { font-weight: 350; margin-left: 11px; letter-spacing: 0; }
.man { margin-left: 8px; }
.badge { position: absolute; left: 37px; top: 0; width: 15px; height: 15px; border-radius: 50%; background: #7b61ff; font: 400 11px/15px "Noto Sans", sans-serif; letter-spacing: 0; text-align: center; }
.main { flex: 1; background: #fff; border-top-left-radius: 5px; display: flex; align-items: flex-start; gap: 21px; padding-left: 33px; }
.map-card { width: 813px; height: 1200px; flex: none; margin-top: 62px; border: 1px solid #dedede; border-radius: 5px; padding: 23px; }
.filters { display: flex; height: 30px; align-items: flex-start; }
.city { width: 150px; padding: 0 4px 0 13px; margin-right: 13px; font-size: 16px; }
.date { width: 150px; padding: 0 7px 0 10px; font-size: 16px; letter-spacing: .4px; }
.box > span { margin-top: -2px; }
.box > .cal { stroke-width: 1; stroke: none; }
.tilde { width: 17px; text-align: center; line-height: 28px; }
.btn { height: 28px; border: 0; border-radius: 3px; color: #fff; font: 400 15px "Noto Sans CJK KR", sans-serif; letter-spacing: -.5px; display: flex; align-items: center; justify-content: center; padding: 0 0 1px; }
.find { width: 76px; background: #555; margin-left: 8px; gap: 9px; }
.find svg { fill: none; stroke: #fff; stroke-width: 1.700; }
.full { width: 124px; background: #8fb0ea; margin-left: 10px; letter-spacing: -1.300px; }
.map { position: relative; margin-top: 30px; width: 767px; height: 963px; overflow: hidden; }
.canvas { display: block; }
.stream polyline { fill: none; stroke: #a5d2f3; stroke-width: 1; stroke-dasharray: 7 2 3 1; }
.yc polyline, .y polyline, .oc polyline, .o polyline { fill: none; stroke-linejoin: round; stroke-linecap: round; }
.yc polyline { stroke: #f1d9a0; stroke-width: 2.600; }
.y polyline { stroke: #fae6ae; stroke-width: 1.400; }
.oc polyline { stroke: #e9b27c; stroke-width: 4; }
.o polyline { stroke: #f8cd9a; stroke-width: 2.500; }
.lb, .lb text { paint-order: stroke; stroke: #fff; stroke-width: 2.500px; stroke-linejoin: round; text-anchor: middle; letter-spacing: -.6px; }
.big text { font-size: 13.500px; fill: #444; font-weight: 500; }
.seoul { font-size: 17px; fill: #333; font-weight: 500; }
.wat text { font-size: 12px; fill: #6784b0; font-weight: 500; stroke: #eef4fb; }
.green text { font-size: 11px; fill: #5f9a50; font-weight: 500; }
.gray text { font-size: 11.500px; fill: #7c8090; font-weight: 500; }
.resort text { font-size: 11px; fill: #7c8fc9; font-weight: 500; }
.brown text { font-size: 10px; fill: #a8703a; font-weight: 500; stroke: #fdf0da; }
.jc circle { fill: #fdf3c6; stroke: #b19a6a; stroke-width: .8; }
.jct { font: 500 7px "Liberation Sans", sans-serif; text-anchor: middle; fill: #7a5c3a; letter-spacing: 0; }
.jcn { font-size: 10.500px; fill: #7c6552; font-weight: 500; paint-order: stroke; stroke: #fff; stroke-width: 2.500px; letter-spacing: -.6px; }
.rt text { font: 700 9.500px "Noto Sans", sans-serif; text-anchor: middle; fill: #fff; letter-spacing: 0; }
.copy { font: 350 15px "Noto Sans CJK KR", sans-serif; fill: #444; letter-spacing: 0; }
.naver { font: 800 12px Inter, "Open Sans", sans-serif; fill: #03c75a; paint-order: stroke; stroke: #fff; stroke-width: 1.500px; letter-spacing: 0; }
.km { font: 10.500px "Liberation Sans", sans-serif; fill: #222; letter-spacing: 0; paint-order: stroke; stroke: #fff; stroke-width: 2px; }
.zoomer { position: absolute; left: 10px; top: 10px; width: 30px; height: 218px; background: #fff; border: 1px solid #444; display: flex; flex-direction: column; align-items: center; }
.zb { height: 23px; width: 28px; border-bottom: 1px solid #ccc; text-align: center; font: 500 20px/21px "Noto Sans", sans-serif; letter-spacing: 0; color: #444; }
.zb.last { border-bottom: 0; border-top: 1px solid #ccc; }
.track { position: relative; width: 4px; flex: 1; margin: 7px 0; background: #c5c9cd; }
.blue { position: absolute; left: 0; right: 0; bottom: 0; height: 42px; background: #2a85ee; }
.knob { position: absolute; left: -8px; bottom: 37px; width: 20px; height: 13px; border: 1px solid #333; background: linear-gradient(#f35b64, #f35b64) center / 12px 2px no-repeat #fff; }
.popup { position: absolute; left: 57px; top: -12px; width: 361px; height: 223px; border: 1px solid #333; background: #fff; padding: 5px; text-align: center; }
.info { background: #484187; height: 171px; padding: 13px 0 0 19px; text-align: left; }
.irow { height: 28px; display: flex; line-height: 28px; color: #fff; white-space: nowrap; }
.ik { width: 65px; font-size: 13px; color: #cfcaf5; letter-spacing: -.5px; }
.ib { width: 15px; font-size: 12px; color: #cfcaf5; }
.iv { font-size: 15.500px; font-weight: 400; letter-spacing: .1px; }
.ago { margin: 17px 0 0; line-height: 20px; font-size: 15px; letter-spacing: .15px; }
.tail { position: absolute; left: 171px; top: 221px; }
.panels { width: 1200px; }
.note { display: flex; justify-content: space-between; margin-top: 30px; height: 32px; color: #e8564b; letter-spacing: -.24px; }
.note b { color: #444; font-weight: 700; letter-spacing: -.7px; }
.grid { display: grid; grid-template-columns: repeat(3, 386px); grid-auto-rows: 350px; gap: 20px 21px; }
.card { border: 1px solid #dedede; border-radius: 4px; padding: 21px 22px; }
.last-card { grid-column: 3; }
h3 { margin: 0; font-size: 15px; font-weight: 700; line-height: 20px; color: #34465c; letter-spacing: -.4px; }
.join { height: 177px; margin: 0 -3px; border-bottom: 2px solid #f5f5f5; display: flex; }
.inst { width: 173px; display: flex; padding: 75px 0 0 33px; }
.jic { display: flex; flex-direction: column; align-items: center; gap: 22px; width: 42px; flex: none; }
.jcell strong { font-weight: 350; font-size: 25px; line-height: 30px; letter-spacing: 0; }
.n16 { margin: 15px 0 0 33px; }
.subs { width: 122px; display: flex; flex-direction: column; align-items: center; padding: 23px 0 0; }
.subs span { margin-top: 23px; }
.subs strong { margin: 24px 0 0 86px; }
.totals { list-style: none; margin: 9px 0 0; padding: 0 17px; }
.totals li { height: 38px; display: flex; align-items: center; }
.tl { margin-left: 10px; flex: 1; letter-spacing: 0; }
.tv { padding-top: 8px; }
.tv b { font-size: 18px; font-weight: 500; letter-spacing: -.3px; }
.blob { margin-top: 67px; height: 70px; border-radius: 30px; background: #eff1fe; }
.faults { margin-top: 54px; display: flex; }
.faults div { flex: 1; display: flex; flex-direction: column; align-items: center; gap: 15px; }
.faults div + div { box-shadow: -1px 0 #5a5f8a; }
.split { display: flex; justify-content: space-between; }
.load { margin: 24px 0 0; white-space: nowrap; letter-spacing: -.35px; }
.load.narrow { margin-top: 23px; width: 160px; white-space: normal; word-break: break-all; }
.grp { display: flex; flex-direction: column; gap: 10px; align-items: flex-end; }
.steps { display: flex; flex-direction: column; align-items: flex-end; gap: 30px; margin-top: 3px; }
.steps b { font-size: 13.500px; font-weight: 700; color: #8672fb; letter-spacing: -.55px; margin-bottom: -10px; }
.uses { margin-top: 34px; letter-spacing: -.35px; }
.uses .grp + .grp { margin-top: 20px; }
.uses .grp + .grp + .grp { margin-top: 30px; }
.diff { letter-spacing: .1px; }
.cubic .u { padding-right: 3px; letter-spacing: -.6px; }
.vbar { width: 16px; background: #f1f1f1; display: flex; flex-direction: column; align-items: center; flex: none; }
.vthumb { width: 13px; height: 934px; background: #c1c1c1; margin-bottom: auto; }
.hbar { height: 17px; background: #f1f1f1; display: flex; align-items: center; }
.hthumb { height: 13px; flex: 1; background: #c1c1c1; }
.arr { width: 17px; height: 17px; flex: none; display: flex; align-items: center; justify-content: center; }
.arr::before { content: ""; border: 4px solid transparent; }
.up::before { border-bottom-color: #8a8a8a; margin-top: -4px; }
.down::before { border-top-color: #505050; margin-bottom: -4px; }
.left::before { border-right-color: #8a8a8a; margin-left: -4px; }
.rightarr::before { border-left-color: #505050; margin-right: -4px; }
.corner { width: 17px; height: 17px; background: #dcdcdc; }
</style>
